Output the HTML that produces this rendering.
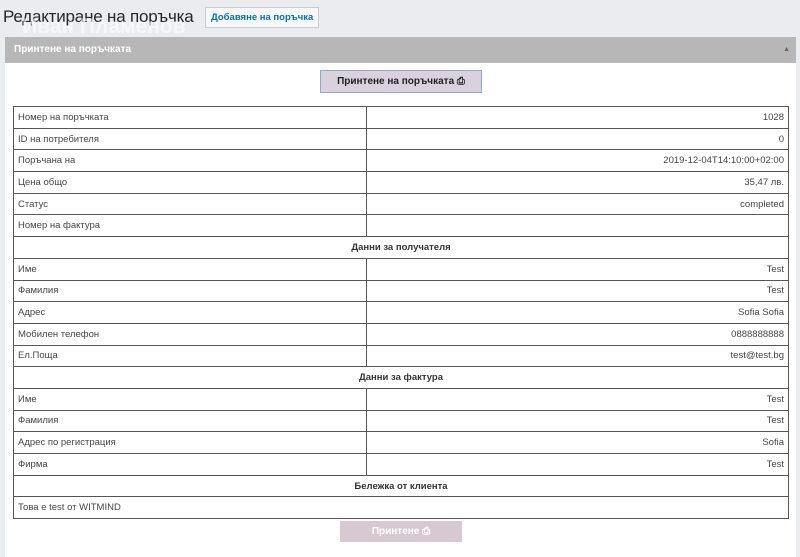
<!DOCTYPE html>
<html><head><meta charset="utf-8"><style>
body{margin:0;width:800px;height:555px;background:#eaecef;font-family:"Liberation Sans",sans-serif;overflow:hidden;position:relative}
h1{position:absolute;left:3px;top:7px;margin:0;font-size:17px;font-weight:normal;color:#23282d;letter-spacing:-0.2px}
.add{position:absolute;left:205px;top:7px;height:19px;padding:0 5px;line-height:19px;border:1px solid #ccc;background:#f7f7f7;color:#0073aa;font-size:9.5px;font-weight:bold}
.wm{position:absolute;left:22px;top:15px;font-size:21px;font-weight:bold;color:rgba(255,255,255,.6)}
.panel{position:absolute;left:5px;top:37px;width:791px;height:520px;background:#fff}
.ph{height:26px;background:#b7b7b7;color:#fff;font-size:10px;font-weight:bold;line-height:26px;padding-left:9px;position:relative}
.ph span{position:absolute;right:6px;top:0;font-size:7px;color:#666}
.pb{position:absolute;left:315px;top:33px;width:160px;height:21px;background:#d9d1dd;border:1px solid #8fa9c9;font-size:10px;font-weight:bold;color:#222;text-align:center;line-height:21px}
table{position:absolute;left:8px;top:69px;width:776px;border-collapse:collapse;font-size:9.5px;color:#444}
td{border:1px solid #555;height:20.7px;padding:0 4px}
td.r{text-align:right}
td.c{text-align:center;font-weight:bold;color:#333}
.b2{position:absolute;left:335px;top:484px;width:122px;height:21px;background:#d7c9d1;color:#fff;font-size:10px;font-weight:bold;text-align:center;line-height:21px}
</style></head><body>
<h1>Редактиране на поръчка</h1>
<div class="add">Добавяне на поръчка</div>
<div class="panel">
<div class="ph">Принтене на поръчката<span>▲</span></div>
<div class="pb">Принтене на поръчката ⎙</div>
<table>
<tr><td style="width:344px">Номер на поръчката</td><td class="r">1028</td></tr>
<tr><td>ID на потребителя</td><td class="r">0</td></tr>
<tr><td>Поръчана на</td><td class="r">2019-12-04T14:10:00+02:00</td></tr>
<tr><td>Цена общо</td><td class="r">35,47 лв.</td></tr>
<tr><td>Статус</td><td class="r">completed</td></tr>
<tr><td>Номер на фактура</td><td class="r"></td></tr>
<tr><td colspan="2" class="c">Данни за получателя</td></tr>
<tr><td>Име</td><td class="r">Test</td></tr>
<tr><td>Фамилия</td><td class="r">Test</td></tr>
<tr><td>Адрес</td><td class="r">Sofia Sofia</td></tr>
<tr><td>Мобилен телефон</td><td class="r">0888888888</td></tr>
<tr><td>Ел.Поща</td><td class="r">test@test.bg</td></tr>
<tr><td colspan="2" class="c">Данни за фактура</td></tr>
<tr><td>Име</td><td class="r">Test</td></tr>
<tr><td>Фамилия</td><td class="r">Test</td></tr>
<tr><td>Адрес по регистрация</td><td class="r">Sofia</td></tr>
<tr><td>Фирма</td><td class="r">Test</td></tr>
<tr><td colspan="2" class="c">Бележка от клиента</td></tr>
<tr><td colspan="2">Това е test от WITMIND</td></tr>
</table>
<div class="b2">Принтене ⎙</div>
</div>
<div class="wm">Иван Пламенов</div>
</body></html>
